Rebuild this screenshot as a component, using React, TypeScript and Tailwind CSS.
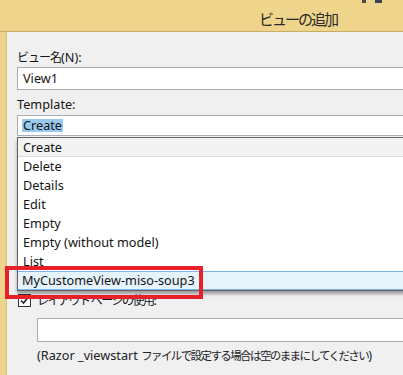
import React from "react";

const F = { fontFamily: '"Noto Sans", "Noto Sans CJK JP", sans-serif' };
const J = { fontFamily: '"Noto Sans CJK JP", "Noto Sans", sans-serif' };

export default function App() {
  const items = ["Delete", "Details", "Edit", "Empty", "Empty (without model)", "List"];
  return (
    <div className="relative w-[403px] h-[375px] overflow-hidden bg-[#EFD58C] text-[#141414] text-[12.7px]" style={F}>
      {/* window top controls edge */}
      <div className="absolute top-0 left-[362px] w-[4px] h-[3px] bg-[#4a4a4a]" />
      <div className="absolute top-0 left-[375px] w-[7px] h-[3px] bg-[#3a4454]" />
      {/* title bar */}
      <div className="h-[32px] flex items-center justify-end pr-[66px] border-b border-[#C8AE68]">
        <span className="text-[15px] tracking-[-2px] text-[#2a2a2a] leading-none mt-[6px]" style={J}>
          ビューの追加
        </span>
      </div>
      {/* dialog body */}
      <div className="ml-[6px] h-[343px] bg-[#F0F0F0] border-l border-[#D9C27E] pl-[10px] pt-[17px] overflow-hidden">
        <div className="h-[16px] leading-[16px]">
          <span style={J} className="tracking-[-1px] text-[12px]">ビュー名</span>(N):
        </div>
        <div className="mt-[2px] w-[400px] h-[23px] bg-white border border-[#ABADB3] flex items-center pl-[5px]">View1</div>
        <div className="mt-[6px] h-[16px] leading-[16px]">Template:</div>
        <div className="mt-[3px] w-[400px] h-[21px] bg-white border border-[#ABADB3] flex items-center pl-[4px]">
          <span className="bg-[#99C9EF] px-[1px] leading-[13px]">Create</span>
        </div>
        <div className="mt-[156px] h-[16px] flex items-center gap-[6px] pl-[1px]">
          <div className="w-[13px] h-[13px] border border-[#333] bg-white flex items-center justify-center">
            <svg width="11" height="11" viewBox="0 0 11 11">
              <path d="M2 5.5 L4.5 8 L9 2.5" stroke="#222" strokeWidth="1.6" fill="none" />
            </svg>
          </div>
          <span style={J} className="tracking-[-1.5px] text-[12px]">レイアウト ページの使用:</span>
        </div>
        <div className="mt-[10px] ml-[20px] w-[400px] h-[24px] bg-white border border-[#ABADB3]" />
        <div className="mt-[5px] ml-[20px] h-[16px] leading-[16px] whitespace-nowrap text-[#222]">
          (Razor _viewstart <span style={J} className="tracking-[-1.6px] text-[11.5px]">ファイルで設定する場合は空のままにしてください</span>)
        </div>
      </div>

      {/* dropdown list */}
      <div className="absolute left-[17px] top-[137px] w-[400px] border-t border-l border-b border-[#646464] bg-white shadow-[0_3px_3px_rgba(0,0,0,0.35)]">
        <div className="h-[19px] bg-[#F3F3F3] border-b border-[#DADADA] pl-[5px] leading-[18px]">Create</div>
        {items.map((t) => (
          <div key={t} className="h-[19px] pl-[5px] leading-[19px]">{t}</div>
        ))}
        <div className="h-[19px] bg-[#E5F3FB] border-y border-[#7EB4EA] pl-[4px] leading-[17px]">MyCustomeView-miso-soup3</div>
      </div>

      {/* red annotation box */}
      <div className="absolute left-[5px] top-[266px] w-[198px] h-[33px] border-[4px] border-[#E8202A]" />
    </div>
  );
}
